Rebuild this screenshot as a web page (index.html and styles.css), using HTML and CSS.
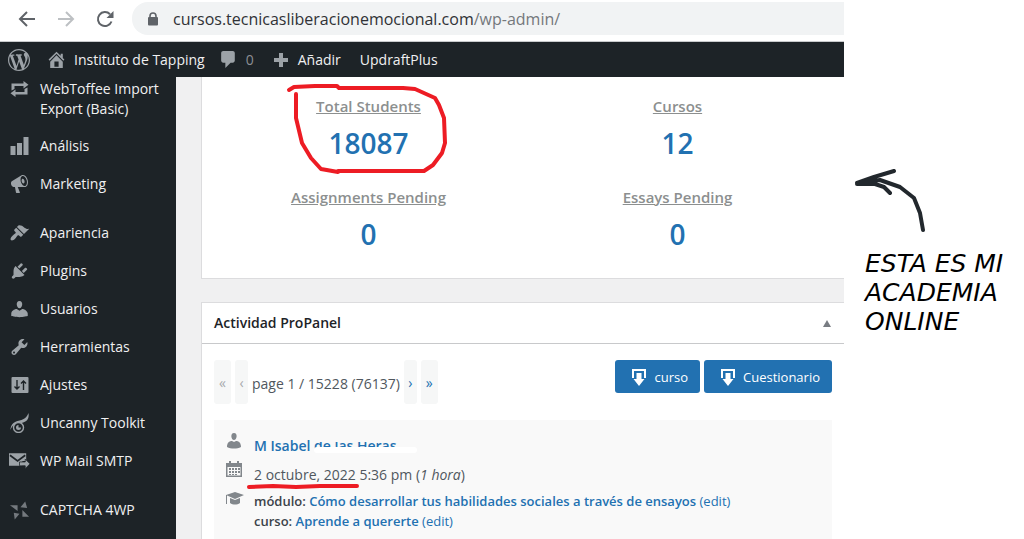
FILE: index.html
```html
<!DOCTYPE html>
<html lang="es">
<head>
<meta charset="utf-8">
<meta name="viewport" content="width=device-width, initial-scale=1">
<title>Instituto de Tapping</title>
<link rel="stylesheet" href="styles.css">
</head>
<body>
<div class="page">
  <div class="browser">
    <header class="toolbar">
      <button class="tool" aria-label="Atrás"><svg width="18" height="18" viewBox="0 0 18 18"><path d="M17 9H2M9 2L2 9l7 7" fill="none" stroke="#5f6368" stroke-width="2"/></svg></button>
      <button class="tool" aria-label="Adelante"><svg width="18" height="18" viewBox="0 0 18 18"><path d="M1 9h15M9 2l7 7-7 7" fill="none" stroke="#bdc0c3" stroke-width="2"/></svg></button>
      <button class="tool" aria-label="Recargar"><svg width="18" height="18" viewBox="0 0 18 18"><path d="M15.500 11.500A7 7 0 1 1 14 4.200" fill="none" stroke="#5f6368" stroke-width="2"/><path d="M17.500 1v7h-7z" fill="#5f6368"/></svg></button>
      <a class="address" href="#">
        <svg class="lock" width="12" height="14" viewBox="0 0 12 14"><path d="M3 6V4a3 3 0 0 1 6 0v2" fill="none" stroke="#5f6368" stroke-width="1.600"/><rect x="1" y="5" width="10" height="8.500" rx="1" fill="#5f6368"/></svg>
        <span>cursos.tecnicasliberacionemocional.com<span class="path">/wp-admin/</span></span>
      </a>
    </header>
    <nav class="adminbar" aria-label="Barra">
      <a class="logo" href="#" aria-label="WordPress"><svg width="22" height="22" viewBox="0 0 20 20"><path d="M20 10c0-5.510-4.490-10-10-10C4.480 0 0 4.490 0 10c0 5.520 4.480 10 10 10 5.510 0 10-4.480 10-10zM7.780 15.370L4.370 6.220c.55-.02 1.170-.08 1.170-.08.5-.06.44-1.130-.06-1.110 0 0-1.450.11-2.370.11-.18 0-.37 0-.58-.01C4.120 2.690 6.870 1.110 10 1.110c2.330 0 4.450.87 6.050 2.340-.68-.11-1.650.39-1.650 1.580 0 .74.45 1.360.9 2.100.35.61.55 1.360.55 2.460 0 1.490-1.400 5-1.400 5l-3.030-8.370c.54-.02.82-.17.82-.17.5-.05.44-1.250-.06-1.220 0 0-1.440.12-2.380.12-.87 0-2.330-.12-2.330-.12-.5-.03-.56 1.200-.06 1.220l.92.08 1.260 3.410zM17.410 10c.24-.64.74-1.870.43-4.250.7 1.290 1.050 2.710 1.050 4.250 0 3.290-1.730 6.240-4.400 7.780.97-2.590 1.940-5.200 2.920-7.780zM6.100 18.090C3.120 16.650 1.110 13.530 1.110 10c0-1.300.23-2.480.72-3.590C3.250 10.300 4.670 14.200 6.100 18.090zm4.030-6.630l2.580 6.980c-.86.29-1.760.45-2.710.45-.79 0-1.570-.11-2.290-.33.81-2.380 1.620-4.740 2.420-7.100z"/></svg></a>
      <a class="site" href="#"><svg width="21" height="21" viewBox="0 0 20 20"><path fill-rule="evenodd" d="M16 8.500l1.530 1.530-1.060 1.060L10 4.600l-6.470 6.490-1.060-1.060L10 2.500l4 4v-2h2v4zm-6-2.460l6 5.990V18H4v-5.970zM12 17v-5H8v5h4z"/></svg>Instituto de Tapping</a>
      <a class="count" href="#"><svg width="21" height="21" viewBox="0 0 20 20"><path d="M5 2h9c1.100 0 2 .9 2 2v7c0 1.100-.9 2-2 2h-2l-5 5v-5H5c-1.100 0-2-.9-2-2V4c0-1.100.9-2 2-2z"/></svg>0</a>
      <a class="add" href="#"><svg width="16" height="16" viewBox="0 0 16 16"><path d="M6 1h4v5h5v4h-5v5H6v-5H1V6h5z"/></svg>Añadir</a>
      <a href="#">UpdraftPlus</a>
    </nav>
    <div class="work">
      <nav class="sidebar" aria-label="Menú">
        <a href="#"><svg viewBox="0 0 20 20"><path d="M5 7v3l-3 1.500V4.500h12V2l5 3.800L14 9.500V7H5zm10 6v-3l3-1.500v7H6V18l-5-3.800L6 10.500V13h9z"/></svg><span>WebToffee Import Export (Basic)</span></a>
        <a href="#"><svg viewBox="0 0 20 20"><path d="M19 19V1h-5v18zM12.500 19V7h-5v12zM6 19v-9H1v9z"/></svg><span>Análisis</span></a>
        <a href="#"><svg viewBox="0 0 20 20"><path fill-rule="evenodd" d="M18.150 5.940c.46 1.620.38 3.220-.02 4.480-.42 1.280-1.260 2.180-2.300 2.480-.16.06-.26.06-.4.06-.06.02-.12.02-.18.02-.06.02-.14.02-.22.02h-6.800l2.220 5.500c.02.14-.06.26-.14.34-.08.1-.24.16-.34.16H6.950c-.1 0-.26-.06-.34-.16-.08-.08-.16-.2-.14-.34l-1-5.500H4.250l-.02-.02c-.5.06-1.080-.18-1.540-.62s-.88-1.080-1.060-1.880c-.24-.8-.2-1.560-.02-2.200.18-.62.58-1.080 1.060-1.300l.02-.02 9-5.400c.1-.06.18-.1.24-.16.06-.04.14-.08.24-.12.16-.08.28-.12.5-.18 1.040-.3 2.240.1 3.220.98s1.840 2.240 2.260 3.860zm-2.580 5.980h-.02c.4-.1.74-.34 1.040-.7.58-.7.86-1.760.86-3.040 0-.64-.1-1.300-.28-1.980-.34-1.360-1.020-2.500-1.780-3.240s-1.680-1.100-2.460-.88c-.82.22-1.400.96-1.700 2-.32 1.040-.28 2.360.06 3.720.38 1.360 1 2.500 1.800 3.240.78.74 1.620 1.100 2.480.88zm-2.540-7.080c.22-.04.42-.02.62.04.38.16.76.48 1.020 1s.42 1.200.42 1.780c0 .3-.04.56-.12.8-.18.48-.44.84-.86.94-.34.1-.8-.06-1.140-.4s-.64-.86-.78-1.500c-.18-.62-.12-1.240.02-1.720s.48-.84.82-.94z"/></svg><span>Marketing</span></a>
        <a class="group" href="#"><svg viewBox="0 0 20 20"><path d="M14.480 11.060L7.410 3.990l1.500-1.500c.5-.56 2.300-.47 3.510.32 1.210.8 1.430 1.280 2.910 2.100 1.180.64 2.450 1.260 4.450.85zm-.71.71L6.700 4.700 4.930 6.470c-.39.39-.39 1.020 0 1.410l1.060 1.060c.39.39.39 1.030 0 1.420-.6.6-1.430 1.110-2.210 1.690-.35.26-.7.53-1.010.84C1.430 14.230.4 16.080 1.400 17.070c.99 1 2.840-.03 4.180-1.360.31-.31.58-.66.85-1.020.57-.78 1.080-1.610 1.690-2.210.39-.39 1.020-.39 1.410 0l1.060 1.060c.39.39 1.020.39 1.410 0z"/></svg><span>Apariencia</span></a>
        <a href="#"><svg viewBox="0 0 20 20"><path d="M13.110 4.360L9.870 7.600 8 5.730l3.240-3.240c.35-.34 1.050-.2 1.560.32.52.51.66 1.210.31 1.550zm-8 1.770l.91-1.120 9.010 9.010-1.190.84c-.71.71-2.630 1.160-3.820 1.160H6.140L4.900 17.260c-.59.59-1.540.59-2.120 0-.59-.58-.59-1.530 0-2.120l1.240-1.240v-3.880c0-1.130.4-3.190 1.090-3.890zm7.260 3.970l3.240-3.240c.34-.35 1.040-.21 1.550.31.52.51.66 1.210.31 1.550l-3.240 3.250z"/></svg><span>Plugins</span></a>
        <a href="#"><svg viewBox="0 0 20 20"><path d="M10 9.250c-2.270 0-2.730-3.440-2.730-3.440C7 4.020 7.820 2 9.970 2c2.160 0 2.980 2.020 2.710 3.810 0 0-.41 3.440-2.680 3.440zm0 2.570L12.720 10c2.390 0 5.520 2.330 5.520 4.530v2.490s-4.650 1.130-8.240 1.130c-3.650 0-8.240-1.130-8.240-1.130v-2.490c0-2.250 2.940-4.480 5.470-4.480z"/></svg><span>Usuarios</span></a>
        <a href="#"><svg viewBox="0 0 20 20"><path fill-rule="evenodd" d="M16.680 9.770c-1.340 1.340-3.300 1.670-4.950.99l-5.410 6.520c-.99.99-2.590.99-3.580 0s-.99-2.590 0-3.570l6.520-5.420c-.68-1.650-.35-3.610.99-4.950 1.280-1.280 3.120-1.620 4.720-1.060l-2.890 2.890 2.820 2.820 2.860-2.870c.53 1.580.18 3.390-1.080 4.650zM3.810 16.210c.4.39 1.040.39 1.430 0 .4-.4.4-1.040 0-1.430-.39-.4-1.030-.4-1.430 0-.39.39-.39 1.030 0 1.430z"/></svg><span>Herramientas</span></a>
        <a href="#"><svg viewBox="0 0 20 20"><rect x="2" y="2" width="17" height="16" rx="1"/><path d="M7.500 5v9M5 11.500l2.500 2.500 2.500-2.500M14 15V6M11.500 8.500L14 6l2.500 2.500" fill="none" stroke="#1d2327" stroke-width="1.400"/></svg><span>Ajustes</span></a>
        <a href="#"><svg viewBox="0 0 20 20"><path d="M1 17c0-5 3-8 7-9 6-1 9-3 11-8 1 6-2 9-7 10-5 0-9 1-11 7z"/><circle cx="9" cy="14.500" r="5" fill="#1d2327" stroke="#9ca2a7" stroke-width="1.400"/><path d="M9 12a2.500 2.500 0 1 0 2.500 2.500H9z"/></svg><span>Uncanny Toolkit</span></a>
        <a href="#"><svg class="wide" viewBox="0 0 22 20"><path d="M0 2h18v8h-4v5H0z"/><path d="M1 4l8 6 8-6" fill="none" stroke="#1d2327" stroke-width="1.800"/><path d="M11 11h6V8l5 5-5 5v-3h-6z" stroke="#1d2327" stroke-width=".8"/></svg><span>WP Mail SMTP</span></a>
        <a class="group" href="#"><svg class="wide dim" viewBox="0 0 22 20"><path d="M1 5l8 0v6zM12 7l5-6 2 7zM14 10l7 7h-7zM5 13l6 1-5 6z"/></svg><span>CAPTCHA 4WP</span></a>
      </nav>
      <main class="content">
        <section class="card overview">
          <div class="stat"><h3>Total Students</h3><b>18087</b>
            <svg class="ring" width="168" height="96" viewBox="0 0 168 96"><path d="M5 7l5-3 21-1h22l2 2 64 0 12 1 20 9 4 7 5 13 1 25-3 10-9 12-9 6H54v1l-17-3-10-11-9-15-6-25V11" fill="none" stroke="#ed1c24" stroke-width="4" stroke-linejoin="round" stroke-linecap="round"/></svg>
          </div>
          <div class="stat"><h3>Cursos</h3><b>12</b></div>
          <div class="stat"><h3>Assignments Pending</h3><b>0</b></div>
          <div class="stat"><h3>Essays Pending</h3><b>0</b></div>
        </section>
        <section class="card activity">
          <header class="cardhead"><h2>Actividad ProPanel</h2><button class="toggle" aria-label="Plegar"><svg width="10" height="8" viewBox="0 0 10 8"><path d="M5 1l4 7H1z" fill="#787c82"/></svg></button></header>
          <div class="cardbody">
            <div class="controls">
              <div class="pager"><button disabled>«</button><button class="slim" disabled>‹</button><span>page 1 / 15228 (76137)</span><button class="slim">›</button><button>»</button></div>
              <div class="exports">
                <button class="primary"><svg width="16" height="18" viewBox="0 0 16 18"><path d="M1 10V1h14v9h-2V3H3v7z"/><path d="M5.500 5h5v6h3L8 18l-5.500-7h3z"/></svg>curso</button>
                <button class="primary"><svg width="16" height="18" viewBox="0 0 16 18"><path d="M1 10V1h14v9h-2V3H3v7z"/><path d="M5.500 5h5v6h3L8 18l-5.500-7h3z"/></svg>Cuestionario</button>
              </div>
            </div>
            <div class="entry">
              <svg width="16" height="18" viewBox="0 0 16 18"><path d="M8 8C5 8 4 1 8 1s3 7 0 7zM1 15c0-4 2-6 5-6l2 1 2-1c3 0 5 2 5 6-4 2-10 2-14 0z"/></svg>
              <p class="who"><a href="#">M Isabel <span class="hidden">de las Heras</span></a></p>
              <svg width="16" height="18" viewBox="0 0 16 18"><path fill-rule="evenodd" d="M0 3h3V1h2v2h6V1h2v2h3v14H0zm1.500 4v8.500h13V7z"/><path d="M3 8h2v2H3zm3 0h2v2H6zm3 0h2v2H9zm3 0h2v2h-2zM3 11h2v2H3zm3 0h2v2H6zm3 0h2v2H9zm3 0h2v2h-2zM3 14h2v1H3zm3 0h2v1H6zm3 0h2v1H9z"/></svg>
              <p class="when"><span class="date">2 octubre, 2022<svg class="mark" width="112" height="6" viewBox="0 0 112 6"><path d="M2 4l24-1 23 1 24-1h37" fill="none" stroke="#ed1c24" stroke-width="4" stroke-linecap="round"/></svg></span> 5:36 pm (<i>1 hora</i>)</p>
              <svg width="18" height="18" viewBox="0 0 18 18"><path d="M0 5l9-3 9 3-9 4zM4 8l5 2 5-2v5c-3 2-7 2-10 0zM0 5h1v9H0z"/></svg>
              <p class="what">módulo: <a href="#">Cómo desarrollar tus habilidades sociales a través de ensayos</a> <a class="edit" href="#">(edit)</a><br>curso: <a href="#">Aprende a quererte</a> <a class="edit" href="#">(edit)</a></p>
            </div>
          </div>
        </section>
      </main>
    </div>
  </div>
  <aside class="note">
    <svg width="76" height="66" viewBox="0 0 76 66"><path d="M68 61l-3-17-6-15-14-11-20-7-23 3 17-6 20-6M2 15h18l9 3 6 6" fill="none" stroke="#22282d" stroke-width="4" stroke-linejoin="round" stroke-linecap="round"/></svg>
    <p>ESTA ES MI ACADEMIA ONLINE</p>
  </aside>
</div>
</body>
</html>
```
FILE: styles.css
```css
* { box-sizing: border-box; }
body { margin: 0; background: #fff; color: #50575e; font: 14px/20px "Open Sans", "Noto Sans", sans-serif; }
h2, h3, p { margin: 0; }
a { color: #2271b1; text-decoration: none; }
button { font: inherit; border: 0; padding: 0; background: none; color: inherit; cursor: pointer; }
svg { display: block; flex: none; }

.page { display: grid; grid-template-columns: minmax(0, 1fr) 180px; height: 100vh; overflow: hidden; }
.browser { display: flex; flex-direction: column; min-height: 0; overflow: hidden; }

.toolbar { display: flex; align-items: center; gap: 21px; padding: 2px 0 6px 18px; border-bottom: 1px solid #c8cacc; }
.address { display: flex; flex: 1; align-items: center; gap: 14px; height: 33px; margin-left: -3px; padding: 0 15px; border-radius: 16px 0 0 16px; background: #f1f3f4; color: #303236; font-size: 16px; white-space: nowrap; }
.path { color: #74787c; }

.adminbar { display: flex; flex: none; align-items: center; height: 35px; padding-left: 8px; background: #1d2327; white-space: nowrap; }
.adminbar a { display: flex; align-items: center; gap: 7px; margin-right: 19px; color: #f0f0f1; }
.adminbar .logo { margin-right: 16px; }
.adminbar .site { margin-right: 13px; }
.adminbar .count { color: #8c8f94; }
.adminbar .add { gap: 9px; margin-right: 14px; }
.adminbar .add { margin-right: 19px; }
.adminbar svg, .sidebar svg { fill: #9ca2a7; }

.work { display: flex; flex: 1; min-height: 0; }
.sidebar { flex: none; width: 176px; background: #1d2327; }
.sidebar a { display: flex; gap: 10px; padding: 9px 8px 9px 9px; color: #f0f0f1; }
.sidebar a:first-child { padding: 2px 8px 8px 9px; }
.sidebar a.group { margin-top: 11px; }
.sidebar svg { width: 21px; height: 20px; }
.sidebar .dim { fill: #74797e; }

.content { flex: 1; min-width: 0; padding-left: 25px; background: #f0f0f1; }
.card { border-left: 1px solid #dcdcde; background: #fff; }
.overview { display: grid; grid-template-columns: 1fr 1fr; row-gap: 11px; padding: 18px 12px 12px; border-bottom: 1px solid #dcdcde; text-align: center; }
.stat { position: relative; }
.stat h3 { color: #8c8f8f; font-size: 15px; line-height: 22px; font-weight: 600; text-decoration: underline; }
.stat b { display: block; padding: 7px 0 12px; color: #2271b1; font-size: 28px; line-height: 39px; font-weight: 600; }
.ring { position: absolute; left: 50%; top: -12px; margin-left: -85px; }

.activity { margin-top: 23px; border-top: 1px solid #dcdcde; }
.cardhead { display: flex; align-items: center; justify-content: space-between; height: 41px; padding: 0 12px; border-bottom: 1px solid #c8c9cb; }
.cardhead h2 { color: #1d2327; font-size: 14px; font-weight: 600; }
.cardbody { padding: 16px 12px; }
.controls { display: flex; justify-content: space-between; align-items: flex-start; }
.pager { display: flex; align-items: center; gap: 4px; line-height: 24px; }
.pager span { padding-top: 4px; }
.pager button { width: 17px; height: 44px; padding-top: 2px; border-radius: 3px; background: #f6f7f7; color: #2271b1; }
.pager .slim { width: 13px; }
.pager button:disabled { color: #a7aaad; }
.exports { display: flex; gap: 4px; }
.primary { display: flex; align-items: center; gap: 7px; height: 33px; padding: 0 12px 0 16px; border-radius: 3px; background: #2271b1; color: #fff; font-size: 13px; }
.primary svg { fill: #fff; }

.entry { display: grid; grid-template-columns: 16px 1fr; column-gap: 12px; margin-top: 16px; padding: 12px; background: #f9f9f9; }
.entry > svg { fill: #82878c; }
.entry a { font-weight: 600; }
.entry a.edit { font-weight: 400; }
.who { padding: 4px 0; }
.when { padding: 5px 0; }
.what { padding: 1px 0; color: #3c434a; font-size: 13px; font-weight: 600; }
.hidden { position: relative; white-space: nowrap; }
.hidden::before { content: ""; position: absolute; left: 0; right: 0; top: 0; height: 6px; background: #f9f9f9; }
.hidden::after { content: ""; position: absolute; left: 0; right: -20px; top: 11px; height: 6px; border-radius: 3px; background: #fff; }
.date { position: relative; }
.mark { position: absolute; left: -7px; top: 18px; }

.note { padding: 169px 10px 0 11px; color: #000; }
.note p { margin: 14px 0 0 10px; font: italic 400 25px/29px "DejaVu Sans", "Open Sans", cursive; }
```
